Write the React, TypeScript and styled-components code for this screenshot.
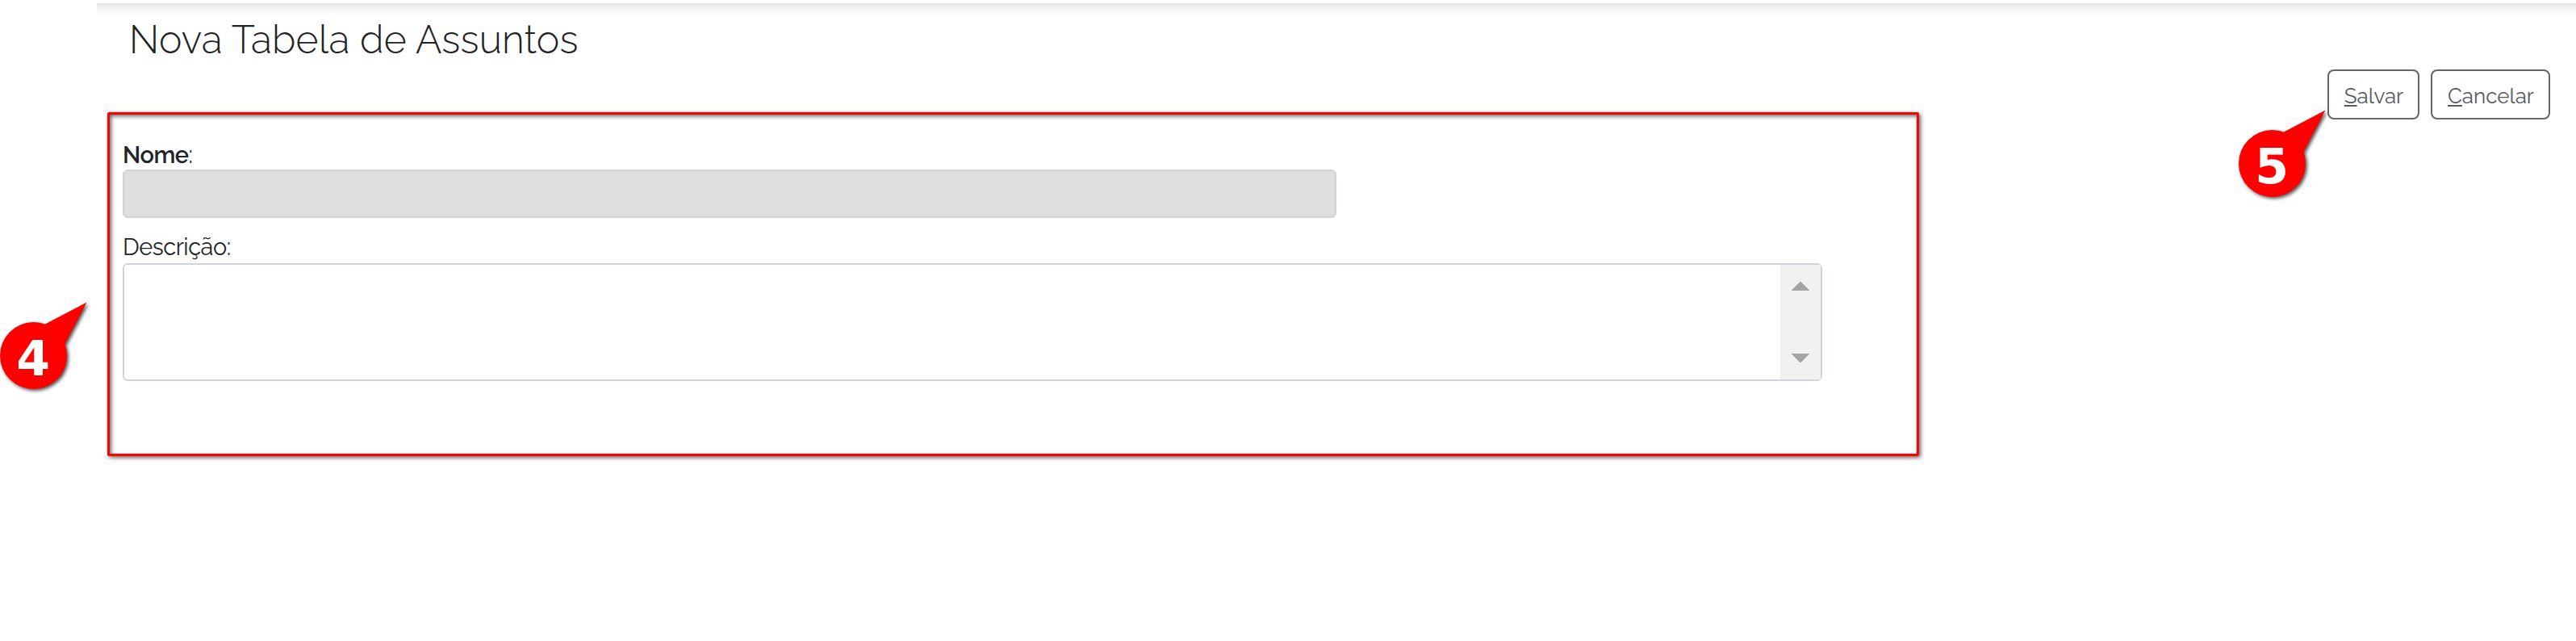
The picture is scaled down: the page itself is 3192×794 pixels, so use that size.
import React from 'react';
import styled, { createGlobalStyle } from 'styled-components';

const Global = createGlobalStyle`
  *{box-sizing:border-box;}
  body{margin:0;background:#fff;font-family:Raleway,Lato,"Open Sans",sans-serif;overflow:hidden;}
`;
const Page = styled.div`
  position:relative;width:3192px;height:794px;padding-left:120px;overflow:hidden;display:flex;flex-direction:column;
`;
const TopShadow = styled.div`
  flex:none;height:16px;margin-top:4px;background:linear-gradient(#e4e4e4,#f2f2f2 40%,#fff);
`;
const Title = styled.h1`
  margin:0 0 0 40px;height:58px;line-height:58px;font-size:48px;font-weight:300;color:#222;
  white-space:nowrap;letter-spacing:.22px;
`;
const Body = styled.div`display:flex;justify-content:space-between;align-items:flex-start;`;
const Panel = styled.section`
  margin:61px 0 0 13px;width:2245px;height:426px;padding:34px 0 0 16px;border:3px solid #f00;border-radius:2px;
  box-shadow:2px 2px 5px rgba(0,0,0,.6), inset 2px 2px 5px rgba(0,0,0,.6);
`;
const Label = styled.label`
  display:block;height:34px;line-height:32px;font-size:29px;letter-spacing:-.5px;color:#212529;white-space:nowrap;
  b{font-weight:600;}
`;
const NameInput = styled.input`
  display:block;width:1504px;height:60px;margin-bottom:20px;border:2px solid #ced4da;border-radius:6px;background:#dedede;
`;
const Area = styled.div`
  display:flex;justify-content:flex-end;width:2106px;height:146px;margin-top:2px;
  border:2px solid #ced4da;border-radius:6px;
`;
const Scroll = styled.div`
  display:flex;flex-direction:column;justify-content:space-between;align-items:center;
  width:50px;padding:20px 0;background:#f0f0f0;
`;
const Actions = styled.div`display:flex;gap:14px;margin:8px 32px 0 0;`;
const Button = styled.button<{ $w: number }>`
  width:${p => p.$w}px;height:62px;padding:3px 0 0 1px;border:2px solid #666;border-radius:8px;background:#fff;
  font:400 26px Raleway,Lato,sans-serif;color:#555a62;
`;
const Pin = styled.div<{ $x: number; $y: number }>`
  position:absolute;left:${p => p.$x}px;top:${p => p.$y}px;width:116px;height:124px;
  svg{display:block;overflow:visible;filter:drop-shadow(2px 2px 2px rgba(0,0,0,.7));}
`;
const Digit = styled.span`
  position:absolute;left:0;top:38px;width:82px;text-align:center;
  font:700 60px/62px "DejaVu Sans",sans-serif;color:#fff;
`;

const Arrow = ({ down }: { down?: boolean }) => (
  <svg width="22" height="12" shapeRendering="crispEdges">
    <path d={down ? 'M0 0H22L11 12Z' : 'M0 12H22L11 0Z'} fill="#a3a3a3" />
  </svg>
);
const Callout = ({ n, x, y }: { n: number; x: number; y: number }) => (
  <Pin $x={x} $y={y}>
    <svg width="116" height="124" fill="#f00">
      <circle cx="41.5" cy="65.5" r="41.5" />
      <path d="M55 27L107.5 -.5L80 52L60 65Z" />
    </svg>
    <Digit>{n}</Digit>
  </Pin>
);

export default function App() {
  return (
    <Page>
      <Global />
      <TopShadow />
      <Title>Nova Tabela de Assuntos</Title>
      <Body>
        <Panel>
          <Label><b>Nome</b>:</Label>
          <NameInput />
          <Label>Descrição:</Label>
          <Area><Scroll><Arrow /><Arrow down /></Scroll></Area>
        </Panel>
        <Actions>
          <Button $w={114}><u>S</u>alvar</Button>
          <Button $w={148}><u>C</u>ancelar</Button>
        </Actions>
      </Body>
      <Callout n={4} x={0} y={375} />
      <Callout n={5} x={2774} y={137} />
    </Page>
  );
}
